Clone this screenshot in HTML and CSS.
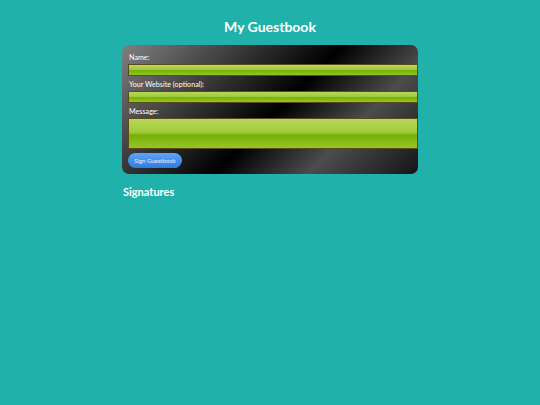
FILE: index.html
```html
<!DOCTYPE html>
<html lang="en">
<head>
    <title>My Guestbook</title>
    <link rel="stylesheet" href="styles.css">
</head>
<body>
    <section class="guestbook">
        <h1>My Guestbook</h1>
        <form class="sign-form" method="post" action="#">
            <label for="name">Name:</label>
            <input type="text" id="name" class="field">
            <label for="website">Your Website (optional):</label>
            <input type="text" id="website" class="field">
            <label for="message">Message:</label>
            <textarea id="message" class="field message"></textarea>
            <input type="button" class="sign-button" value="Sign Guestbook">
        </form>
        <h2>Signatures</h2>
    </section>
</body>
</html>
```

FILE: styles.css
```css
html, body {
    margin: 0;
    height: 100%;
    background: #20b2aa;
}
body {
    font-family: "Lato", "DejaVu Sans", sans-serif;
    color: #fff;
}
.guestbook {
    width: 296px;
    margin: 0 auto;
    padding-top: 17px;
}
h1 {
    margin: 0 0 9px;
    font-size: 14px;
    line-height: 19px;
    text-align: center;
}
.sign-form {
    display: flex;
    flex-direction: column;
    align-items: flex-start;
    box-sizing: border-box;
    height: 129px;
    padding: 7px 0 0 6px;
    border-radius: 7px;
    background: linear-gradient(135deg, #808080 0%, #000 52%, #4c4c4c 74%, #151515 100%);
}
label {
    margin: 0 0 1px 1px;
    font-size: 7.2px;
    line-height: 11px;
}
.field {
    display: block;
    box-sizing: border-box;
    width: 290px;
    height: 12px;
    margin: 0 0 3px;
    padding: 0;
    border: 1px solid #5c4a1e;
    border-radius: 0;
    background: linear-gradient(#b8d858 0%, #a0cb38 46%, #76b00a 56%, #96c526 100%);
    resize: none;
}
.message {
    height: 31px;
}
.sign-button {
    width: 54px;
    height: 15px;
    margin-top: 1px;
    padding: 0;
    border: 0;
    border-radius: 8px;
    background: linear-gradient(#5fa6f5, #2f7be0);
    color: #e4f0ff;
    font-family: inherit;
    font-size: 6px;
}
h2 {
    margin: 10px 0 0 1px;
    font-size: 11px;
    line-height: 15px;
}
```
